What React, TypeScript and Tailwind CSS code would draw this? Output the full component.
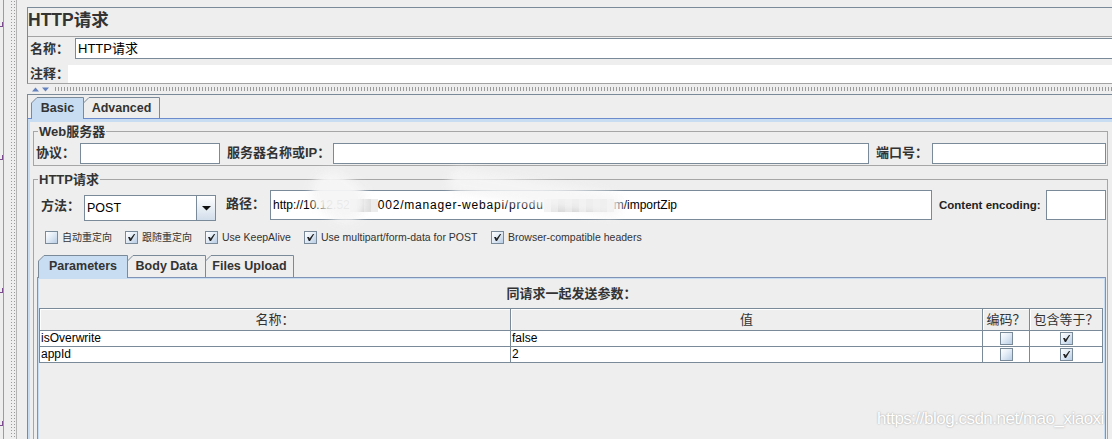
import React from "react";

function CheckBox({ checked = false }: { checked?: boolean }) {
  return (
    <span className="flex h-[13px] w-[13px] shrink-0 items-center justify-center border border-[#7a8a99] bg-[image:linear-gradient(135deg,#ffffff_0%,#e3ecf6_45%,#b9cee5_100%)]">
      {checked && (
        <svg width="9" height="9" viewBox="0 0 9 9">
          <path d="M1 4 L3 4 L3.6 5.6 L7 1 L8.2 1 L4 8 L2.8 8 Z" fill="#222" />
        </svg>
      )}
    </span>
  );
}

function Tab({
  label,
  selected = false,
  w,
  h,
  cls,
  pt,
}: {
  label: string;
  selected?: boolean;
  w: number;
  h: number;
  cls: string;
  pt: string;
}) {
  const H = selected ? h + 1 : h;
  const d = `M0.5 ${H} L0.5 6 L6 0.5 L${w - 0.5} 0.5 L${w - 0.5} ${H}`;
  return (
    <div className={`relative flex shrink-0 justify-center ${cls}`}>
      <svg className="absolute left-0 top-0" width={w} height={H}>
        <path d={d + " Z"} fill={selected ? "#c8ddf2" : "#eeeeee"} />
        <path d={d} fill="none" stroke="#7a8a99" />
      </svg>
      <span className={`relative text-[12.5px] font-bold leading-[14px] text-[#333] ${pt}`}>{label}</span>
    </div>
  );
}

function Field({ cls, children }: { cls: string; children?: React.ReactNode }) {
  return (
    <div className={`flex shrink-0 items-center border border-[#7a8a99] bg-white text-[12px] text-black ${cls}`}>
      {children}
    </div>
  );
}

const Mosaic = ({ colors, bw }: { colors: string[]; bw: string }) => (
  <span className="inline-flex h-[13px] shrink-0 items-stretch">
    {colors.map((c, i) => (
      <span key={i} className={`block ${bw}`} style={{ backgroundColor: c }} />
    ))}
  </span>
);

export default function App() {
  const opts = [
    { label: "自动重定向", checked: false, w: "w-[80px]", cjk: true },
    { label: "跟随重定向", checked: true, w: "w-[80px]", cjk: true },
    { label: "Use KeepAlive", checked: true, w: "w-[99px]", cjk: false },
    { label: "Use multipart/form-data for POST", checked: true, w: "w-[187px]", cjk: false },
    { label: "Browser-compatible headers", checked: true, w: "w-[170px]", cjk: false },
  ];

  const rows = [
    { name: "isOverwrite", value: "false" },
    { name: "appId", value: "2" },
  ];

  return (
    <div className="relative flex h-[439px] w-[1112px] overflow-hidden bg-[#eeeeee] font-['Liberation_Sans','Noto_Sans_CJK_SC',sans-serif] text-[#333]">
      {/* left tree/splitter strip */}
      <div className="flex h-full shrink-0">
        <div className="flex w-[3px] flex-col gap-[128px] pt-[22px]">
          {[0, 1, 2, 3].map((i) => (
            <span key={i} className="block h-[5px] w-[3px] border-b border-r border-[#7b4b8e]" />
          ))}
        </div>
        <div className="w-px bg-[#9c9c9c]" />
        <div className="w-[6px]" />
        <div className="w-[6px] bg-[image:radial-gradient(circle,#9a9a9a_0.6px,transparent_0.9px)] bg-[length:3px_3px]" />
        <div className="w-px bg-[#b4b4b4]" />
      </div>

      <div className="flex min-w-0 flex-1 flex-col pl-[10px] pt-[7px]">
        {/* header box */}
        <div className="flex shrink-0 flex-col border-b border-l border-t border-b-[#a3a3a3] border-l-[#7a8a99] border-t-[#7a8a99]">
          <div className="flex h-[29px] items-center border-b border-[#a3a3a3] pb-[2px]">
            <span className="text-[17.5px] font-bold leading-none text-[#333]">HTTP请求</span>
          </div>
          <div className="mt-[1px] flex h-[21px] items-center">
            <span className="w-[47px] shrink-0 whitespace-nowrap pl-[2px] text-[13px] font-bold">名称：</span>
            <div className="flex h-full flex-1 items-center border-b border-l border-t border-[#7a8a99] bg-white pl-[2px] text-[13px] text-black">
              HTTP请求
            </div>
          </div>
          <div className="mt-[6px] flex h-[18px] items-center">
            <span className="relative z-10 w-[40px] shrink-0 whitespace-nowrap pl-[2px] text-[13px] font-bold">注释：</span>
            <div className="h-full flex-1 bg-white" />
          </div>
        </div>

        {/* splitter */}
        <div className="flex h-[10px] shrink-0 items-center">
          <svg className="ml-[5px] shrink-0" width="18" height="5" viewBox="0 0 18 5">
            <path d="M0 4.5 L3.5 0.5 L7 4.5 Z" fill="#6382bf" />
            <path d="M10 0.5 L17 0.5 L13.5 4.5 Z" fill="#6382bf" />
          </svg>
          <div className="ml-[4px] h-[4px] flex-1 bg-[image:radial-gradient(circle,#9a9a9a_0.6px,transparent_0.9px)] bg-[length:3px_2px]" />
        </div>

        {/* main tabbed pane */}
        <div className="flex flex-1 flex-col border-l border-t border-[#7a8a99] pt-[2px]">
          <div className="relative z-10 flex h-[21px] pl-[3px]">
            <Tab label="Basic" selected w={53} h={21} cls="w-[53px] h-[22px]" pt="pt-[4px]" />
            <Tab label="Advanced" w={77} h={21} cls="-ml-px w-[77px] h-[21px]" pt="pt-[4px]" />
          </div>
          <div className="flex flex-1 flex-col border-t border-[#6b8bcc]">
            <div className="flex flex-1 flex-col border-l-2 border-t-[3px] border-[#c8ddf2]">
              {/* Web服务器 */}
              <fieldset className="ml-[3px] mt-[3px] w-[1075px] shrink-0 border border-[#a6a6a6] px-0 pb-[1px] pt-[4px]">
                <legend className="ml-[4px] px-[1px] text-[13px] font-bold leading-[13px] text-[#333]">Web服务器</legend>
                <div className="flex h-[22px] items-center text-[13px] font-bold">
                  <span className="w-[46px] shrink-0 pl-[2px]">协议：</span>
                  <Field cls="h-[21px] w-[140px]" />
                  <span className="w-[113px] shrink-0 pl-[7px]">服务器名称或IP：</span>
                  <Field cls="h-[21px] w-[536px]" />
                  <span className="w-[63px] shrink-0 pl-[7px]">端口号：</span>
                  <Field cls="h-[21px] w-[174px]" />
                </div>
              </fieldset>

              {/* HTTP请求 */}
              <fieldset className="ml-[3px] mt-[7px] flex w-[1075px] flex-1 flex-col border border-b-0 border-[#a6a6a6] px-0 pt-[4px]">
                <legend className="ml-[4px] px-[1px] text-[13px] font-bold leading-[13px] text-[#333]">HTTP请求</legend>
                <div className="flex h-[31px] shrink-0 items-start">
                  <span className="mt-[9px] w-[50px] shrink-0 pl-[7px] text-[13px] font-bold leading-[14px]">方法：</span>
                  <div className="mt-[5px] flex h-[26px] w-[132px] shrink-0 border border-[#7a8a99]">
                    <div className="flex flex-1 items-center bg-white pl-[2px] text-[12.5px] text-black">POST</div>
                    <div className="flex w-[19px] items-center justify-center border-l border-[#7a8a99] bg-[image:linear-gradient(180deg,#ffffff,#d2deeb)]">
                      <svg width="9" height="5" viewBox="0 0 9 5">
                        <path d="M0 0 L9 0 L4.5 4.5 Z" fill="#111" />
                      </svg>
                    </div>
                  </div>
                  <span className="mt-[7px] w-[54px] shrink-0 pl-[10px] text-[13px] font-bold leading-[14px]">路径：</span>
                  <div className="flex h-[30px] w-[662px] shrink-0 items-center overflow-hidden whitespace-nowrap border border-[#7a8a99] bg-white pl-[2px] text-[12px] text-black">
                    <span>http://10.12.52</span>
                    <Mosaic bw="w-[7px]" colors={["#d2d2d2", "#c6c6c6", "#dcdcdc", "#ececec"]} />
                    <span className="tracking-[0.8px]">002/manager-webapi/produ</span>
                    <Mosaic bw="w-[7px]" colors={["#f2f2f2", "#e4e4e4", "#d2d2d2", "#dedede", "#c9c9c9", "#e0e0e0", "#c6c6c6", "#d6d6d6", "#cdcdcd", "#e6e6e6"]} />
                    <span>m/importZip</span>
                  </div>
                  <span className="mt-[8px] w-[114px] shrink-0 pl-[7px] text-[11.5px] font-bold leading-[14px] text-[#222]">Content encoding:</span>
                  <Field cls="h-[30px] w-[60px]" />
                </div>

                <div className="mt-[10px] flex h-[13px] shrink-0 items-center pl-[11px]">
                  {opts.map((o) => (
                    <div key={o.label} className={`flex shrink-0 items-center gap-[4px] ${o.w}`}>
                      <CheckBox checked={o.checked} />
                      <span className={`whitespace-nowrap leading-[13px] text-[#333] ${o.cjk ? "text-[10px]" : "text-[10.5px]"}`}>
                        {o.label}
                      </span>
                    </div>
                  ))}
                </div>

                {/* Parameters tabbed pane */}
                <div className="ml-[3px] mt-[11px] flex w-[1069px] flex-1 flex-col">
                  <div className="relative z-10 flex h-[22px] pl-[1px]">
                    <Tab label="Parameters" selected w={90} h={22} cls="w-[90px] h-[23px]" pt="pt-[4px]" />
                    <Tab label="Body Data" w={79} h={22} cls="-ml-px w-[79px] h-[22px]" pt="pt-[4px]" />
                    <Tab label="Files Upload" w={89} h={22} cls="-ml-px w-[89px] h-[22px]" pt="pt-[4px]" />
                  </div>
                  <div className="flex flex-1 flex-col border-l border-r border-t border-[#7f93b6]">
                    <div className="flex flex-1 flex-col border-l border-r border-t border-[#c8ddf2]">
                      <div className="flex h-[29px] shrink-0 items-center justify-center text-[13px] font-bold text-[#333]">
                        同请求一起发送参数：
                      </div>
                      <div className="flex w-[1064px] shrink-0 flex-col border-l border-t border-[#7a8a99]">
                        <div className="flex h-[22px] text-[13px] text-[#333]">
                          <div className="flex w-[471px] items-center justify-center border-b border-r border-[#7a8a99] shadow-[inset_1px_1px_0_#ffffff]">名称：</div>
                          <div className="flex w-[472px] items-center justify-center border-b border-r border-[#7a8a99] shadow-[inset_1px_1px_0_#ffffff]">值</div>
                          <div className="flex w-[47px] items-center justify-center border-b border-r border-[#7a8a99] shadow-[inset_1px_1px_0_#ffffff]">编码？</div>
                          <div className="flex w-[73px] items-center justify-center border-b border-r border-[#7a8a99] shadow-[inset_1px_1px_0_#ffffff]">包含等于？</div>
                        </div>
                        {rows.map((r) => (
                          <div key={r.name} className="flex h-[16px] bg-white text-[12px] leading-[15px] text-black">
                            <div className="w-[471px] border-b border-r border-[#7a8a99] pl-[1px]">{r.name}</div>
                            <div className="w-[472px] border-b border-r border-[#7a8a99] pl-[1px]">{r.value}</div>
                            <div className="flex w-[47px] items-center justify-center border-b border-r border-[#7a8a99]">
                              <CheckBox />
                            </div>
                            <div className="flex w-[73px] items-center justify-center border-b border-r border-[#7a8a99]">
                              <CheckBox checked />
                            </div>
                          </div>
                        ))}
                      </div>
                    </div>
                  </div>
                </div>
              </fieldset>
            </div>
          </div>
        </div>
      </div>

      {/* redaction smears over the path field */}
      <div className="pointer-events-none absolute left-[310px] top-[176px] h-[42px] w-[58px] rotate-[35deg] rounded-full bg-[#f6f6f6] opacity-95 blur-[4px]" />
      <div className="pointer-events-none absolute left-[448px] top-[181px] h-[24px] w-[175px] rotate-[9deg] rounded-full bg-[#f6f6f6] opacity-85 blur-[4px]" />

      {/* watermark */}
      <div className="pointer-events-none absolute left-[877px] top-[409px] whitespace-nowrap text-[17px] leading-[20px] tracking-[-0.5px] text-white [text-shadow:0_0_2px_rgba(0,0,0,0.35)]">
        https://blog.csdn.net/mao_xiaoxi
      </div>
    </div>
  );
}
